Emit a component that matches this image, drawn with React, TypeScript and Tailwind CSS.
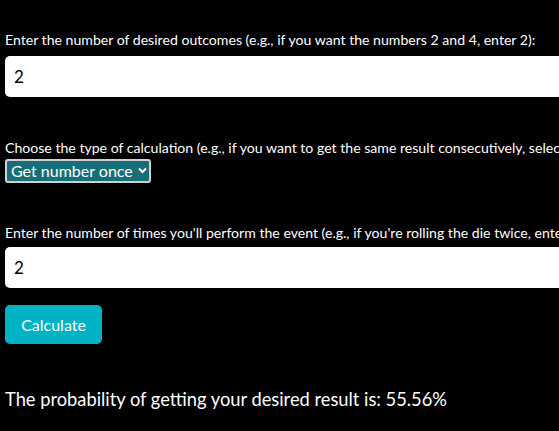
import { useState } from "react";

export default function App() {
	const [outcomes, setOutcomes] = useState("2");
	const [times, setTimes] = useState("2");
	const [mode, setMode] = useState("once");

	return (
		<div className="w-[559px] h-[431px] overflow-hidden bg-black text-white font-['Lato',sans-serif]">
			<div className="pt-[30px] px-[5px]">
				<label className="block text-[14.1px] leading-[20px] whitespace-nowrap">
					Enter the number of desired outcomes (e.g., if you want the numbers 2 and 4, enter 2):
				</label>
				<input
					type="number"
					value={outcomes}
					onChange={(e) => setOutcomes(e.target.value)}
					className="mt-[6px] h-[41px] w-[600px] rounded-[5px] bg-white text-black px-[9px] text-[17px] outline-none"
				/>

				<label className="block mt-[41px] text-[14.1px] leading-[20px] whitespace-nowrap">
					Choose the type of calculation (e.g., if you want to get the same result consecutively, select "Get number consecutively"):
				</label>
				<div className="relative mt-[1px] w-[146px]">
					<select
						value={mode}
						onChange={(e) => setMode(e.target.value)}
						className="h-[24px] w-[146px] appearance-none rounded-[3px] border-2 border-[#d0d0d0] bg-[#176e78] pl-[4px] text-[16px] leading-[20px] text-white"
					>
						<option value="once">Get number once</option>
						<option value="consecutive">Get number consecutively</option>
					</select>
					<svg
						className="pointer-events-none absolute right-[4px] top-[8px]"
						width="9"
						height="7"
						viewBox="0 0 9 7"
						fill="none"
					>
						<path d="M1 1.5 L4.5 5 L8 1.5" stroke="white" strokeWidth="2" />
					</svg>
				</div>

				<label className="block mt-[40px] text-[14.1px] leading-[20px] whitespace-nowrap">
					Enter the number of times you'll perform the event (e.g., if you're rolling the die twice, enter 2):
				</label>
				<input
					type="number"
					value={times}
					onChange={(e) => setTimes(e.target.value)}
					className="mt-[4px] h-[41px] w-[600px] rounded-[5px] bg-white text-black px-[9px] text-[17px] outline-none"
				/>

				<button className="block mt-[17px] h-[39px] w-[97px] rounded-[5px] bg-[#00b3c4] text-[16px] text-white">
					Calculate
				</button>

				<p className="mt-[42px] text-[18.3px] leading-[27px] whitespace-nowrap">
					The probability of getting your desired result is: 55.56%
				</p>
			</div>
		</div>
	);
}
